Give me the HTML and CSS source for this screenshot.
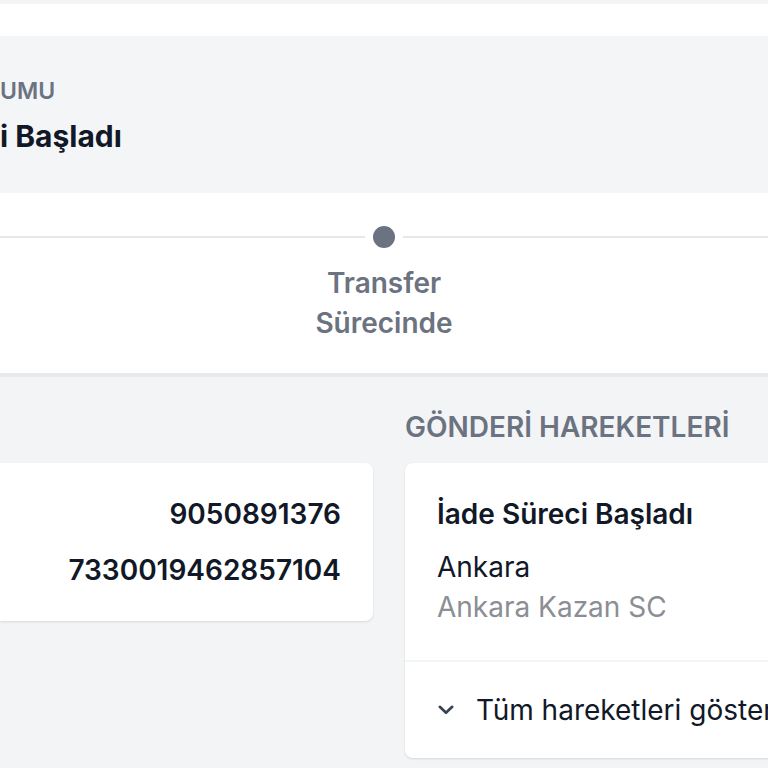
FILE: index.html
```html
<!DOCTYPE html>
<html lang="tr">
<head>
<meta charset="utf-8">
<link rel="stylesheet" href="styles.css">
</head>
<body>
<div class="page">
  <section class="summary">
    <div class="status-panel">
      <div class="status-label">UMU</div>
      <div class="status-value">i Başladı</div>
    </div>
    <div class="stepper">
      <div class="step-track">
        <span class="seg"></span>
        <span class="dot"></span>
        <span class="seg"></span>
      </div>
      <div class="step-label">Transfer<br>Sürecinde</div>
    </div>
  </section>

  <section class="columns">
    <div class="col">
      <h2 class="col-title">&nbsp;</h2>
      <div class="card info-card">
        <div class="info-row">9050891376</div>
        <div class="info-row">7330019462857104</div>
      </div>
    </div>
    <div class="col">
      <h2 class="col-title">GÖNDERİ HAREKETLERİ</h2>
      <div class="card moves-card">
        <div class="move">
          <div class="move-title">İade Süreci Başladı</div>
          <div class="move-city">Ankara</div>
          <div class="move-branch">Ankara Kazan SC</div>
        </div>
        <button class="show-all">
          <svg class="chev" viewBox="0 0 16 10" width="16" height="10"><path d="M1.8 1.8 L8 7.8 L14.2 1.8" fill="none" stroke="#374151" stroke-width="2.6" stroke-linecap="round" stroke-linejoin="round"/></svg>
          <span>Tüm hareketleri göster</span>
        </button>
      </div>
    </div>
  </section>
</div>
</body>
</html>
```

FILE: styles.css
```css
* { box-sizing: border-box; }
html, body { margin: 0; padding: 0; }
body {
  background: #f3f4f6;
  font-family: Inter, "Noto Sans", sans-serif;
  color: #111827;
  width: 768px;
  height: 768px;
  overflow: hidden;
}
.page {
  padding-top: 4px;
  width: 768px;
}
.summary {
  background: #ffffff;
  padding-top: 32px;
  border-bottom: 4px solid #e8e9ec;
}
.status-panel {
  background: #f4f5f7;
  height: 157px;
  padding-top: 40px;
}
.status-label {
  font-size: 23px;
  font-weight: 600;
  color: #6b7280;
  line-height: 30px;
}
.status-value {
  font-size: 30px;
  font-weight: 700;
  color: #111827;
  line-height: 40px;
  margin-top: 10px;
}
.stepper {
  height: 180px;
  padding-top: 33px;
  display: flex;
  flex-direction: column;
  align-items: center;
}
.step-track {
  width: 100%;
  display: flex;
  align-items: center;
  gap: 8px;
}
.seg {
  flex: 1;
  height: 2px;
  background: #e5e7eb;
}
.dot {
  width: 22px;
  height: 22px;
  border-radius: 50%;
  background: #6b7280;
}
.step-label {
  margin-top: 15px;
  font-size: 28px;
  font-weight: 600;
  line-height: 40px;
  color: #6b7280;
  text-align: center;
}
.columns {
  display: flex;
  gap: 32px;
  padding-top: 30px;
}
.col {
  width: 373px;
  flex: none;
}
.col-title {
  margin: 0 0 16px 0;
  font-size: 28px;
  font-weight: 600;
  color: #6b7280;
  line-height: 40px;
  white-space: nowrap;
}
.card {
  background: #ffffff;
  border-radius: 8px;
  box-shadow: 0 1px 3px rgba(0,0,0,0.08), 0 1px 2px rgba(0,0,0,0.04);
}
.info-card {
  border-top-left-radius: 0;
  border-bottom-left-radius: 0;
  padding: 33px 32px 33px 0;
}
.info-row {
  text-align: right;
  font-size: 28px;
  font-weight: 600;
  line-height: 36px;
  color: #111827;
}
.info-row + .info-row { margin-top: 20px; }
.moves-card {
  width: 420px;
  height: 295px;
  display: flex;
  flex-direction: column;
}
.move {
  padding: 33px 32px 33px 32px;
  border-bottom: 2px solid #f3f4f6;
}
.move-title {
  font-size: 28px;
  font-weight: 600;
  line-height: 36px;
}
.move-city {
  margin-top: 15px;
  font-size: 28px;
  line-height: 40px;
  color: #111827;
}
.move-branch {
  font-size: 28px;
  line-height: 40px;
  color: #8b8e94;
}
.show-all {
  display: flex;
  align-items: center;
  gap: 22px;
  border: 0;
  background: transparent;
  padding: 0 0 0 33px;
  flex: 1;
  font-family: inherit;
  font-size: 28px;
  color: #111827;
  cursor: pointer;
  white-space: nowrap;
}
```
